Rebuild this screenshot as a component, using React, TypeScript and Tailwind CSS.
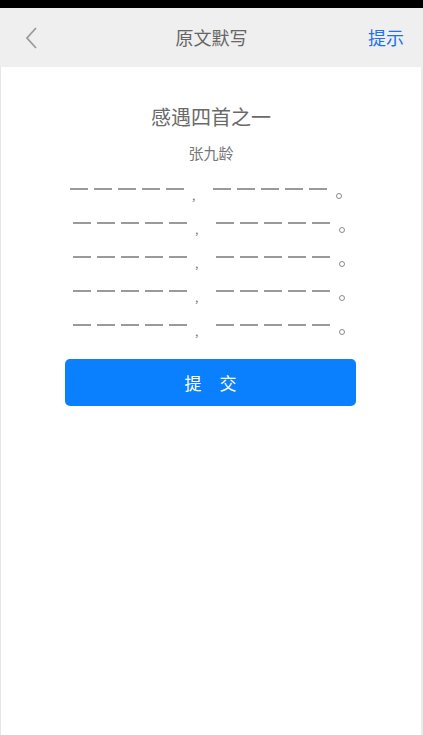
import React from "react";

const font = { fontFamily: '"Noto Sans CJK SC", "Noto Sans", sans-serif' };

function Dashes() {
  return (
    <div className="flex gap-[6px]">
      {[0, 1, 2, 3, 4].map((i) => (
        <div key={i} className="w-[18px] h-[2px] bg-[#9a9a9a]" />
      ))}
    </div>
  );
}

function Row({ shift }: { shift: boolean }) {
  return (
    <div className={`flex items-start h-[34px] ${shift ? "pl-[72px]" : "pl-[69px]"}`}>
      <Dashes />
      <div className="w-[29px] relative h-[12px]">
        <span className="absolute left-[8px] top-[1px] text-[12px] leading-[12px] text-[#777]" style={font}>,</span>
      </div>
      <Dashes />
      <div className="w-[18px] relative h-[12px]">
        <div className="absolute left-[9px] top-[5px] w-[6px] h-[6px] rounded-full border border-[#8a8a8a]" />
      </div>
    </div>
  );
}

export default function App() {
  return (
    <div className="w-[423px] h-[735px] flex flex-col bg-white" style={font}>
      <div className="h-[8px] bg-black" />
      <div className="h-[59px] bg-[#efefef] flex items-center justify-between px-[24px] relative">
        <svg width="14" height="22" viewBox="0 0 14 22" className="ml-[1px]">
          <path d="M11 1 L2 11 L11 21" fill="none" stroke="#9a9a9a" strokeWidth="1.8" />
        </svg>
        <div className="absolute left-0 right-0 text-center text-[18px] text-[#666] pointer-events-none">原文默写</div>
        <div className="text-[18px] text-[#1f6ff0] mr-[-5px]">提示</div>
      </div>
      <div className="flex-1 border-l border-[#e6e6e6] border-r-2 border-r-[#ececec] flex flex-col">
        <div className="pt-[36px] text-center text-[20px] leading-[28px] text-[#6a6a6a]">感遇四首之一</div>
        <div className="mt-[12px] text-center text-[15px] leading-[20px] text-[#777]">张九龄</div>
        <div className="mt-[25px] flex flex-col">
          <Row shift={false} />
          <Row shift={true} />
          <Row shift={true} />
          <Row shift={true} />
          <Row shift={true} />
        </div>
        <div className="px-[64px] mt-[1px] pr-[65px]">
          <button className="w-full h-[47px] bg-[#0a80ff] rounded-[5px] text-white text-[17px] tracking-[18px] pl-[18px]">提交</button>
        </div>
      </div>
    </div>
  );
}
